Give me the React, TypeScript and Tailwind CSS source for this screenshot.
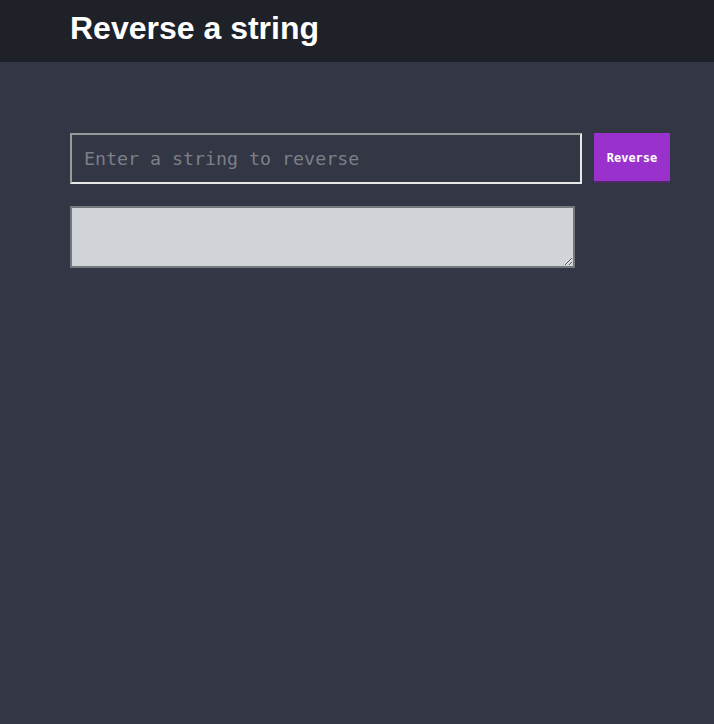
import React, { useState } from 'react';

export default function App() {
  const [text, setText] = useState('');
  const [result, setResult] = useState('');

  return (
    <div className="min-h-screen bg-[#333645]" style={{ fontFamily: 'Arial, "Liberation Sans", sans-serif' }}>
      <header className="h-[62px] bg-[#1f2129] pl-[70px] pt-[9px]">
        <h1 className="text-[32px] font-bold leading-[38px] text-white font-['Liberation_Sans',Arial,sans-serif]">Reverse a string</h1>
      </header>

      <main className="pl-[70px] pt-[71px]">
        <div className="flex items-start gap-[12px]">
          <input
            value={text}
            onChange={(e) => setText(e.target.value)}
            placeholder="Enter a string to reverse"
            className="h-[51px] w-[512px] border-2 border-t-[#9a9a9a] border-l-[#9a9a9a] border-b-[#e8e8e8] border-r-[#e8e8e8] bg-[#333645] px-[12px] text-[18.3px] text-white placeholder:text-[#7d7f87] outline-none font-['DejaVu_Sans_Mono',monospace]"
          />
          <button
            onClick={() => setResult(text.split('').reverse().join(''))}
            className="h-[48px] w-[76px] bg-[#9932cc] pt-[2px] text-[12px] font-bold text-white shadow-[0_2px_0_#52286b] font-['DejaVu_Sans_Mono',monospace]"
          >
            Reverse
          </button>
        </div>
        <textarea
          readOnly
          value={result}
          className="mt-[22px] block h-[62px] w-[505px] border-2 border-[#76777c] bg-[#d0d3d8] text-black outline-none"
        />
      </main>
    </div>
  );
}
